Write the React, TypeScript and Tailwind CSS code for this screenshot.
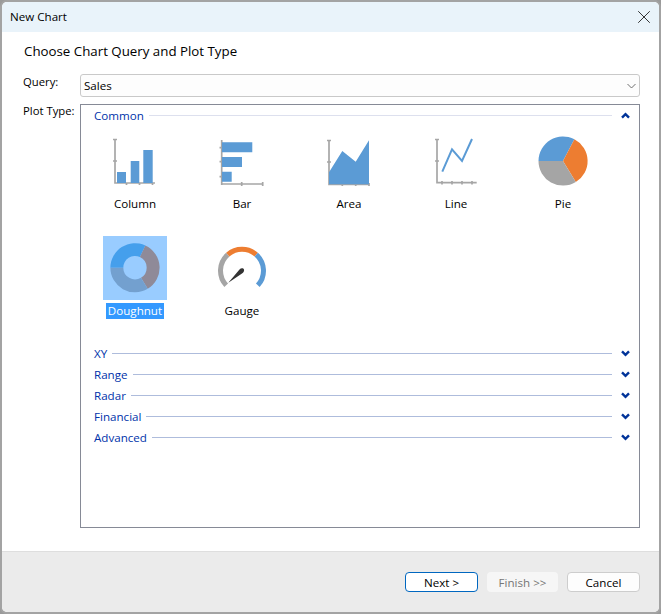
import { X } from "lucide-react";

const font = "font-['Open_Sans','Noto_Sans',sans-serif]";

function Axis({ d }: { d: string }) {
  return <path d={d} fill="none" stroke="#a6a6a6" strokeWidth="1.7" />;
}

function ColumnIcon() {
  return (
    <svg width="64" height="64" viewBox="0 0 64 64">
      <Axis d="M12 10V54H52M10 10.5H14M10 32H14M23.5 54V56M36.5 54V56M49.5 54V56" />
      <path d="M14 43H23V54H14ZM27.7 32H36.3V54H27.7ZM40.3 21H49.7V54H40.3Z" fill="#5b9bd5" />
    </svg>
  );
}

function BarIcon() {
  return (
    <svg width="64" height="64" viewBox="0 0 64 64">
      <Axis d="M11.7 11V56M11.7 55H52.7M31.7 53V57M52.7 53V57M9.5 18.7H11.7M9.5 32.7H11.7M9.5 47.7H11.7" />
      <path d="M12 13.3H42.3V23.3H12ZM12 28H32V38H12ZM12 42.7H21.7V52.7H12Z" fill="#5b9bd5" />
    </svg>
  );
}

function AreaIcon() {
  return (
    <svg width="64" height="64" viewBox="0 0 64 64">
      <Axis d="M12 11V55.3H52M10 11.5H14M10 33H14M25.3 54V57M38.7 54V57M52 54V57" />
      <path d="M12 43.3L25.3 22L38.7 32.7L52 11.3V55.3H12Z" fill="#5b9bd5" />
    </svg>
  );
}

function LineIcon() {
  return (
    <svg width="64" height="64" viewBox="0 0 64 64">
      <Axis d="M13 10V53.7H52.7M11 10.5H15M11 32H15M18 52V55.5M28 52V55.5M38 52V55.5M48 52V55.5" />
      <path d="M18.3 42.7L28 20.3L38 32L48 10" fill="none" stroke="#5b9bd5" strokeWidth="2" />
    </svg>
  );
}

function PieIcon() {
  return (
    <svg width="64" height="64" viewBox="0 0 64 64">
      <path d="M32 32H7.5A24.5 24.5 0 0 1 43.4 10.3Z" fill="#5b9bd5" />
      <path d="M32 32L43.4 10.3A24.5 24.5 0 0 1 44.8 53Z" fill="#ed7d31" />
      <path d="M32 32L44.8 53A24.5 24.5 0 0 1 7.5 32Z" fill="#a5a5a5" />
    </svg>
  );
}

function DoughnutIcon() {
  return (
    <svg width="64" height="64" viewBox="0 0 64 64">
      <path d="M7.4 31.7A24.6 24.6 0 0 1 42.3 9.4L36.9 21.1A11.7 11.7 0 0 0 20.3 31.7Z" fill="#459fec" />
      <path d="M42.3 9.4A24.6 24.6 0 0 1 44.7 52.8L38 41.7A11.7 11.7 0 0 0 36.9 21.1Z" fill="#8f8a98" />
      <path d="M44.7 52.8A24.6 24.6 0 0 1 7.4 31.7H20.3A11.7 11.7 0 0 0 38 41.7Z" fill="#73a0cf" />
    </svg>
  );
}

function GaugeIcon() {
  return (
    <svg width="64" height="64" viewBox="0 0 64 64" fill="none">
      <path d="M16.2 49.3A21.5 21.5 0 0 1 17.8 18.6" stroke="#a5a5a5" strokeWidth="5" />
      <path d="M17.8 18.6A21.5 21.5 0 0 1 46.2 18.6" stroke="#ed7d31" strokeWidth="5" />
      <path d="M46.2 18.6A21.5 21.5 0 0 1 47.8 49.3" stroke="#5b9bd5" strokeWidth="5" />
      <path d="M18.3 46.7L29.5 33.5C31 31.7 33.5 32 34 33.5C34.4 35 33.5 36.5 32 37.5Z" fill="#333333" />
    </svg>
  );
}

const charts = [
  { label: "Column", icon: <ColumnIcon /> },
  { label: "Bar", icon: <BarIcon /> },
  { label: "Area", icon: <AreaIcon /> },
  { label: "Line", icon: <LineIcon /> },
  { label: "Pie", icon: <PieIcon /> },
  { label: "Doughnut", icon: <DoughnutIcon />, selected: true },
  { label: "Gauge", icon: <GaugeIcon /> },
];

function Chevron({ up }: { up?: boolean }) {
  return (
    <svg width="9" height="7" viewBox="0 0 9 7" className="shrink-0">
      <path
        d={up ? "M1 5.7L4.5 2.2L8 5.7" : "M1 1.3L4.5 4.8L8 1.3"}
        fill="none"
        stroke="#003399"
        strokeWidth="2.4"
      />
    </svg>
  );
}

function GroupHeader({ title, open, line }: { title: string; open?: boolean; line: string }) {
  return (
    <div className="flex h-[21px] items-center pl-[13px] pr-[9px]">
      <span className="text-[11.6px] leading-none text-[#0033aa]">{title}</span>
      <span className={`ml-[5px] h-px flex-1 ${line}`} />
      <span className="ml-[9px] flex">
        <Chevron up={open} />
      </span>
    </div>
  );
}

export default function App() {
  return (
    <div className={`${font} h-[614px] w-[661px] bg-[#9a9a9a] text-[11.6px] text-black`}>
      <div className="flex h-full flex-col overflow-hidden rounded-[7px] border-2 border-[#a3a3a3] bg-white">
        <div className="flex h-[30px] shrink-0 items-center justify-between bg-[#e9f3fa] pl-[8px] pr-[4px]">
          <span>New Chart</span>
          <X className="size-[22px] text-[#222222]" strokeWidth={1} />
        </div>

        <div className="flex flex-1 flex-col pl-[21px] pr-[19px]">
          <h1 className="ml-px mt-[10px] h-[19px] text-[13.3px] leading-[19px] font-normal">Choose Chart Query and Plot Type</h1>

          <div className="mt-[13px] flex">
            <span className="w-[57px] shrink-0 text-[11.3px] leading-[16px]">Query:</span>
            <div className="flex h-[23px] flex-1 items-center justify-between rounded-[3px] border border-[#c9c9c9] bg-[#fdfdfd] pl-[3px] pr-[3px]">
              <span>Sales</span>
              <svg width="9" height="6" viewBox="0 0 9 6" fill="none">
                <path d="M0.5 1L4.5 5L8.5 1" stroke="#606060" strokeWidth="0.9" />
              </svg>
            </div>
          </div>

          <div className="mt-[7px] flex">
            <span className="w-[57px] shrink-0 text-[11.3px] leading-[14px]">Plot Type:</span>
            <div className="h-[424px] flex-1 border border-[#868a96] bg-white">
              <GroupHeader title="Common" open line="bg-[#dde0ee]" />
              <div className="mt-[1px] grid grid-cols-[repeat(5,107px)] pl-[0.5px]">
                {charts.map((c) => (
                  <div key={c.label} className="flex h-[107px] flex-col items-center pt-[2px]">
                    <div className={c.selected ? "bg-[#99ccff]" : ""}>{c.icon}</div>
                    <span
                      className={`mt-[3px] px-[2px] leading-[16px] ${c.selected ? "bg-[#3399ff] text-white" : ""}`}
                    >
                      {c.label}
                    </span>
                  </div>
                ))}
              </div>
              <div className="mt-[2px]">
                {["XY", "Range", "Radar", "Financial", "Advanced"].map((t) => (
                  <GroupHeader key={t} title={t} line="bg-[#aebcdc]" />
                ))}
              </div>
            </div>
          </div>
        </div>

        <div className="flex h-[61px] shrink-0 items-start justify-end gap-[9px] border-t border-[#dedede] bg-[#ebebeb] pr-[19px] pt-[20px]">
          <button className="h-[20px] w-[73px] rounded-[4px] border-[1.5px] border-[#0067c0] bg-white pt-px leading-[16px]">Next &gt;</button>
          <button className="h-[20px] w-[71px] rounded-[4px] bg-[#f6f6f6] pt-px leading-[16px] text-[#777777]">Finish &gt;&gt;</button>
          <button className="h-[20px] w-[73px] rounded-[4px] border border-[#cdcdcd] bg-[#fdfdfd] pt-px leading-[16px]">Cancel</button>
        </div>
      </div>
    </div>
  );
}
